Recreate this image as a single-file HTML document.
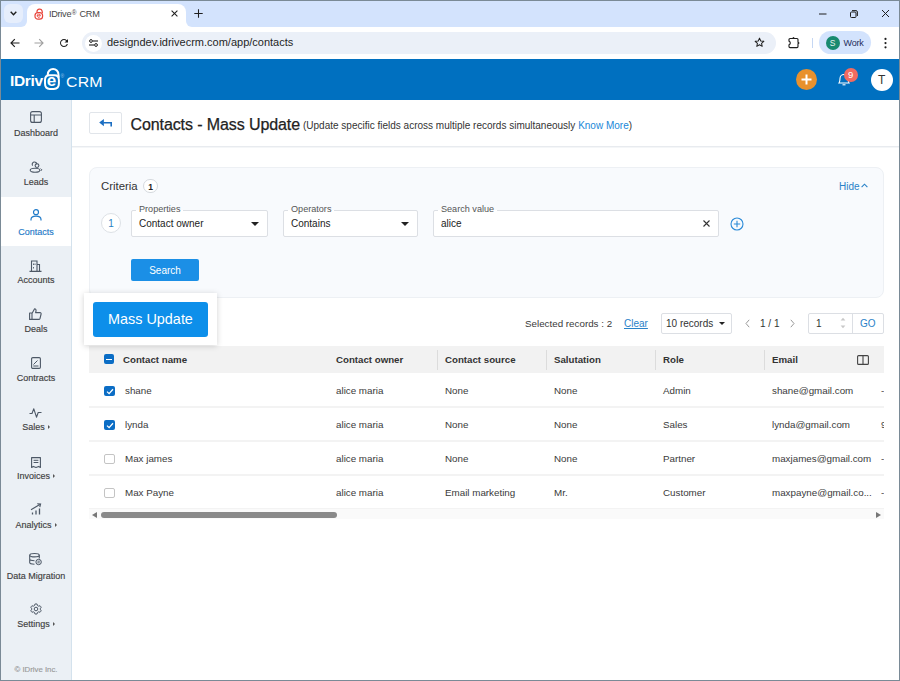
<!DOCTYPE html>
<html><head><meta charset="utf-8">
<style>
*{box-sizing:border-box;margin:0;padding:0}
html,body{width:900px;height:681px;overflow:hidden;background:#fff;font-family:"Liberation Sans",sans-serif;color:#333}
.a{position:absolute}
.t{position:absolute;white-space:nowrap;line-height:1}
svg{position:absolute;overflow:visible}
.lb{position:absolute;left:1px;width:70px;text-align:center;font-size:9px;color:#3d3d3d;white-space:nowrap;line-height:1;-webkit-text-stroke:0.15px currentColor}
.sic{position:absolute;left:30px}
</style></head><body>
<!-- ===== Browser chrome ===== -->
<div class="a" style="left:0;top:0;width:900px;height:27px;background:#d3e3fd"></div>
<!-- tab -->
<div class="a" style="left:27px;top:4px;width:159px;height:24px;background:#fff;border-radius:8px 8px 0 0"></div>
<div class="a" style="left:21px;top:21px;width:6px;height:6px;background:#fff"></div>
<div class="a" style="left:15px;top:15px;width:12px;height:12px;background:#d3e3fd;border-bottom-right-radius:6px"></div>
<div class="a" style="left:186px;top:21px;width:6px;height:6px;background:#fff"></div>
<div class="a" style="left:186px;top:15px;width:12px;height:12px;background:#d3e3fd;border-bottom-left-radius:6px"></div>
<div class="a" style="left:4px;top:4px;width:19px;height:19px;border-radius:6px;background:#e6eefc"></div>
<svg style="left:10px;top:11px" width="7" height="5" viewBox="0 0 7 5"><path d="M0.7 0.8 L3.5 3.8 L6.3 0.8" fill="none" stroke="#1f1f1f" stroke-width="1.4"/></svg>
<svg style="left:34px;top:8px" width="10" height="12" viewBox="0 0 10 12"><path d="M3 4.6 V3.6 A2.6 2.6 0 0 1 8.1 3 L8.4 5" fill="none" stroke="#e8453c" stroke-width="1.2"/><rect x="1" y="4.6" width="7.6" height="6.6" rx="3" fill="none" stroke="#e8453c" stroke-width="1.2"/><path d="M3.3 7.8 H6.5 M6.4 7.8 A1.6 1.6 0 1 0 5.8 9" fill="none" stroke="#e8453c" stroke-width="0.9"/></svg>
<div class="t" style="left:49px;top:9.8px;font-size:9.2px;letter-spacing:-0.3px;color:#474747">IDrive<span style="font-size:6.5px;vertical-align:2px;margin:0 1px 0 0.5px">®</span> CRM</div>
<svg style="left:171px;top:10px" width="7" height="7" viewBox="0 0 7 7"><path d="M0.6 0.6 L6.4 6.4 M6.4 0.6 L0.6 6.4" stroke="#1f1f1f" stroke-width="1.05"/></svg>
<svg style="left:194px;top:9px" width="9" height="9" viewBox="0 0 9 9"><path d="M4.5 0.3 V8.7 M0.3 4.5 H8.7" stroke="#1f1f1f" stroke-width="1.05"/></svg>
<!-- window controls -->
<svg style="left:819px;top:13px" width="8" height="2" viewBox="0 0 8 2"><path d="M0 1 H7.5" stroke="#1f1f1f" stroke-width="1"/></svg>
<svg style="left:850px;top:10px" width="8" height="8" viewBox="0 0 8 8"><rect x="0.5" y="2" width="5.5" height="5.5" rx="1" fill="none" stroke="#1f1f1f" stroke-width="1"/><path d="M2 0.6 H6 A1.5 1.5 0 0 1 7.4 2 V6" fill="none" stroke="#1f1f1f" stroke-width="1"/></svg>
<svg style="left:882px;top:10px" width="7" height="7" viewBox="0 0 7 7"><path d="M0 0 L7 7 M7 0 L0 7" stroke="#1f1f1f" stroke-width="1"/></svg>
<!-- toolbar -->
<div class="a" style="left:0;top:27px;width:900px;height:32px;background:#fff"></div>
<svg style="left:10px;top:38px" width="10" height="10" viewBox="0 0 10 10"><path d="M9.5 5 H1.2 M4.8 1.2 L1 5 L4.8 8.8" fill="none" stroke="#1f1f1f" stroke-width="1.15"/></svg>
<svg style="left:34px;top:38px" width="10" height="10" viewBox="0 0 10 10"><path d="M0.5 5 H8.8 M5.2 1.2 L9 5 L5.2 8.8" fill="none" stroke="#a0a0a0" stroke-width="1.15"/></svg>
<svg style="left:58px;top:37px" width="12" height="12" viewBox="0 0 24 24"><path d="M17.65 6.35A7.958 7.958 0 0 0 12 4c-4.42 0-7.99 3.58-7.99 8s3.57 8 7.99 8c3.73 0 6.84-2.55 7.73-6h-2.08A5.99 5.99 0 0 1 12 18c-3.31 0-6-2.690-6-6s2.69-6 6-6c1.66 0 3.14.69 4.22 1.78L13 11h7V4l-2.35 2.35z" fill="#1f1f1f"/></svg>
<div class="a" style="left:82px;top:31.6px;width:694px;height:22.8px;border-radius:11.4px;background:#ebf0f8"></div>
<div class="a" style="left:85px;top:35px;width:17px;height:17px;border-radius:50%;background:#fff"></div>
<svg style="left:89px;top:39px" width="9" height="8" viewBox="0 0 9 8"><circle cx="2" cy="2" r="1.4" fill="none" stroke="#1f1f1f" stroke-width="1"/><path d="M4 2 H9" stroke="#1f1f1f" stroke-width="1.1"/><circle cx="7" cy="6" r="1.4" fill="none" stroke="#1f1f1f" stroke-width="1"/><path d="M0 6 H5" stroke="#1f1f1f" stroke-width="1.1"/></svg>
<div class="t" style="left:107px;top:37px;font-size:11px;color:#1f1f1f">designdev.idrivecrm.com/app/contacts</div>
<svg style="left:754px;top:37px" width="11" height="11" viewBox="0 0 24 24"><path d="M12 2.5 L14.8 8.6 L21.5 9.3 L16.5 13.8 L17.9 20.4 L12 17 L6.1 20.4 L7.5 13.8 L2.5 9.3 L9.2 8.6 Z" fill="none" stroke="#1f1f1f" stroke-width="2.2" stroke-linejoin="round"/></svg>
<svg style="left:788px;top:37px" width="12" height="12" viewBox="0 0 12 12"><path d="M2 1.5 H4.7 L5.5 0.7 L6.3 1.5 H9 A1 1 0 0 1 10 2.5 V5.2 L10.9 6 L10 6.8 V9.6 A1 1 0 0 1 9 10.6 H2 A1 1 0 0 1 1 9.6 V7.8 A1.9 1.9 0 0 0 1 4.2 V2.5 A1 1 0 0 1 2 1.5 Z" fill="none" stroke="#1f1f1f" stroke-width="1.15" stroke-linejoin="round"/></svg>
<div class="a" style="left:812px;top:38px;width:1px;height:10px;background:#c5d7f3"></div>
<div class="a" style="left:819px;top:31px;width:52px;height:23px;border-radius:12px;background:#d3e3fd"></div>
<div class="a" style="left:825.5px;top:36px;width:14px;height:14px;border-radius:50%;background:#188a6f"></div>
<div class="t" style="left:825.5px;width:14px;text-align:center;top:39px;font-size:8.5px;color:#e6f4ef">S</div>
<div class="t" style="left:843.5px;top:38.5px;font-size:9px;color:#1f2d5c;letter-spacing:-0.2px">Work</div>
<svg style="left:884px;top:37px" width="3" height="12" viewBox="0 0 3 12"><circle cx="1.5" cy="1.9" r="1.1" fill="#1f1f1f"/><circle cx="1.5" cy="6.1" r="1.1" fill="#1f1f1f"/><circle cx="1.5" cy="10.3" r="1.1" fill="#1f1f1f"/></svg>

<!-- ===== App header ===== -->
<div class="a" style="left:0;top:59px;width:900px;height:41px;background:#0070c0"></div>
<div class="t" style="left:10px;top:73.2px;font-size:15.5px;font-weight:bold;color:#fff;letter-spacing:-0.35px">IDriv</div>
<svg style="left:44px;top:67px" width="18" height="24" viewBox="0 0 18 24"><path d="M3.8 8.2 V7.3 A5.3 5.3 0 0 1 14.4 7.3 L14.8 10.5" fill="none" stroke="#fff" stroke-width="2"/><path d="M5.5 8.2 H10.5 C13.5 8.2 14.9 10 14.9 13 V16.6 C14.9 20 13 21.9 9.8 21.9 H5.8 C2.6 21.9 1 20 1 16.6 V13 C1 10 2.6 8.2 5.5 8.2 Z" fill="none" stroke="#fff" stroke-width="2"/></svg>
<div class="t" style="left:46.8px;top:72px;font-size:17px;font-weight:bold;color:#fff">e</div>
<div class="t" style="left:60.5px;top:74px;font-size:5px;color:#9cc4ea">®</div>
<div class="t" style="left:66px;top:75.3px;font-size:14px;color:#fff;letter-spacing:0.2px;transform:scaleX(1.13);transform-origin:0 0">CRM</div>
<div class="a" style="left:796px;top:69px;width:21px;height:21px;border-radius:50%;background:#e8912d"></div>
<svg style="left:801px;top:74px" width="11" height="11" viewBox="0 0 11 11"><path d="M5.5 0.5 V10.5 M0.5 5.5 H10.5" stroke="#fff" stroke-width="2"/></svg>
<svg style="left:837px;top:72px" width="14" height="15" viewBox="0 0 14 15"><path d="M2 11 C3 9.5 3 8 3 6.5 A4 4 0 0 1 11 6.5 C11 8 11 9.5 12 11 Z" fill="none" stroke="#fff" stroke-width="1.1"/><path d="M5.5 12.8 H8.5" stroke="#fff" stroke-width="1.1"/></svg>
<div class="a" style="left:844px;top:68px;width:14px;height:14px;border-radius:50%;background:#f26b60"></div>
<div class="t" style="left:848px;top:70px;font-size:9.5px;color:#fff">9</div>
<div class="a" style="left:871px;top:69px;width:22px;height:22px;border-radius:50%;background:#fff"></div>
<div class="t" style="left:878px;top:74px;font-size:12px;color:#333">T</div>

<!-- ===== Sidebar ===== -->
<div class="a" style="left:0;top:100px;width:72px;height:581px;background:#ebf0f5;border-right:1px solid #d4e2ed"></div>
<div class="a" style="left:1px;top:197px;width:70px;height:49px;background:#fff"></div>
<svg style="left:30px;top:110.5px" width="12" height="12" viewBox="0 0 12 12"><rect x="0.6" y="0.6" width="10.8" height="10.8" rx="2" fill="none" stroke="#4d5866" stroke-width="1.1"/><path d="M0.6 4 H11.4 M4.2 4 V11.4" stroke="#4d5866" stroke-width="1.1"/></svg>
<div class="lb" style="top:129.08px;color:#3f3f3f">Dashboard</div>
<svg style="left:29px;top:162.2px" width="14" height="11" viewBox="0 0 14 11"><path d="M3.6 3.6 A2.3 2.3 0 1 1 7.8 2.4" fill="none" stroke="#4d5866" stroke-width="1.1"/><circle cx="8" cy="3.6" r="1.9" fill="none" stroke="#4d5866" stroke-width="1.1"/><ellipse cx="6" cy="8.3" rx="4.8" ry="2" fill="none" stroke="#4d5866" stroke-width="1.1"/><path d="M11.6 6.6 L12.8 7.8 L11.6 9" fill="none" stroke="#4d5866" stroke-width="1"/></svg>
<div class="lb" style="top:177.98px;color:#3f3f3f">Leads</div>
<svg style="left:30px;top:209.3px" width="12" height="12" viewBox="0 0 12 12"><circle cx="6" cy="3.2" r="2.5" fill="none" stroke="#1f7ac8" stroke-width="1.2"/><path d="M1 11.5 V10.5 C1 8 3 7.2 6 7.2 C9 7.2 11 8 11 10.5 V11.5" fill="none" stroke="#1f7ac8" stroke-width="1.2"/></svg>
<div class="lb" style="top:227.58px;color:#1f7ac8">Contacts</div>
<svg style="left:29px;top:260.0px" width="13" height="12" viewBox="0 0 13 12"><path d="M2.5 11 V1 H8 V11 M8 4.5 H10.5 V11 M0.5 11.4 H12.5" fill="none" stroke="#4d5866" stroke-width="1.1"/><path d="M4.5 3.5 V5 M4.5 7 V8.5 M6 3.5 V5" stroke="#4d5866" stroke-width="0.9"/></svg>
<div class="lb" style="top:276.18px;color:#3f3f3f">Accounts</div>
<svg style="left:29px;top:308.0px" width="13" height="12" viewBox="0 0 13 12"><path d="M0.6 5 H3 V11.4 H0.6 Z M3 5.5 L5.6 0.8 C6.8 0.8 7.2 1.8 7 3 L6.6 4.6 H11 C11.8 4.6 12.3 5.3 12.1 6 L11 10.5 C10.8 11.1 10.4 11.4 9.8 11.4 H3" fill="none" stroke="#4d5866" stroke-width="1.1" stroke-linejoin="round"/></svg>
<div class="lb" style="top:325.18px;color:#3f3f3f">Deals</div>
<svg style="left:31px;top:357.0px" width="10" height="12" viewBox="0 0 10 12"><rect x="0.6" y="0.6" width="8.8" height="10.8" rx="1.2" fill="none" stroke="#4d5866" stroke-width="1.1"/><path d="M2.5 7.5 L6.5 3.5 M2.3 9 H7.5" stroke="#4d5866" stroke-width="1"/></svg>
<div class="lb" style="top:374.18px;color:#3f3f3f">Contracts</div>
<svg style="left:29px;top:407.5px" width="13" height="10" viewBox="0 0 13 10"><path d="M0.5 5.5 H3 L4.8 0.8 L7.5 9.2 L9.2 4.5 H12.5" fill="none" stroke="#4d5866" stroke-width="1.1" stroke-linejoin="round"/></svg>
<div class="lb" style="top:423.38px;color:#3f3f3f">Sales<span style="display:inline-block;width:0;height:0;border-left:2.6px solid #555;border-top:2.6px solid transparent;border-bottom:2.6px solid transparent;margin-left:3px;vertical-align:1px"></span></div>
<svg style="left:31px;top:456.5px" width="10" height="11" viewBox="0 0 10 11"><path d="M0.6 0.6 H9.4 V10.4 L7.6 9.4 L5 10.4 L2.4 9.4 L0.6 10.4 Z" fill="none" stroke="#4d5866" stroke-width="1.1" stroke-linejoin="round"/><path d="M2.6 3.3 H7.4 M2.6 5.5 H7.4" stroke="#4d5866" stroke-width="1"/></svg>
<div class="lb" style="top:472.18px;color:#3f3f3f">Invoices<span style="display:inline-block;width:0;height:0;border-left:2.6px solid #555;border-top:2.6px solid transparent;border-bottom:2.6px solid transparent;margin-left:3px;vertical-align:1px"></span></div>
<svg style="left:30px;top:503.0px" width="12" height="12" viewBox="0 0 12 12"><path d="M2.5 11.5 V9.4 M6 11.5 V7.4 M9.5 11.5 V5.4" stroke="#4d5866" stroke-width="1.3"/><path d="M1 6.8 L10.2 1.2 M7.2 0.8 L10.6 1 L9.8 4.2" fill="none" stroke="#4d5866" stroke-width="1.1"/></svg>
<div class="lb" style="top:521.48px;color:#3f3f3f">Analytics<span style="display:inline-block;width:0;height:0;border-left:2.6px solid #555;border-top:2.6px solid transparent;border-bottom:2.6px solid transparent;margin-left:3px;vertical-align:1px"></span></div>
<svg style="left:29px;top:553.2px" width="13" height="12" viewBox="0 0 13 12"><ellipse cx="5.5" cy="2.2" rx="4.8" ry="1.7" fill="none" stroke="#4d5866" stroke-width="1.1"/><path d="M0.7 2.2 V9.6 C0.7 10.6 2.8 11.3 5.5 11.3 M10.3 2.2 V5.5 M0.7 6 C0.7 7 2.8 7.7 5.5 7.7" fill="none" stroke="#4d5866" stroke-width="1.1"/><circle cx="9.6" cy="9" r="2.7" fill="none" stroke="#4d5866" stroke-width="1"/><path d="M8.5 8.2 H10.8 M10.7 9.8 H8.4" stroke="#4d5866" stroke-width="0.9"/></svg>
<div class="lb" style="top:571.88px;color:#3f3f3f">Data Migration</div>
<svg style="left:30px;top:603.0px" width="12" height="12" viewBox="0 0 24 24"><path d="M12 1.8 L14.2 2.2 L14.9 5 L17.4 6.4 L20.1 5.5 L21.6 7.4 L22.2 9.6 L20.2 11.6 V12.4 L22.2 14.4 L21.6 16.6 L20.1 18.5 L17.4 17.6 L14.9 19 L14.2 21.8 L12 22.2 L9.8 21.8 L9.1 19 L6.6 17.6 L3.9 18.5 L2.4 16.6 L1.8 14.4 L3.8 12.4 V11.6 L1.8 9.6 L2.4 7.4 L3.9 5.5 L6.6 6.4 L9.1 5 L9.8 2.2 Z" fill="none" stroke="#4d5866" stroke-width="2" stroke-linejoin="round"/><circle cx="12" cy="12" r="3.6" fill="none" stroke="#4d5866" stroke-width="2"/></svg>
<div class="lb" style="top:620.18px;color:#3f3f3f">Settings<span style="display:inline-block;width:0;height:0;border-left:2.6px solid #555;border-top:2.6px solid transparent;border-bottom:2.6px solid transparent;margin-left:3px;vertical-align:1px"></span></div>
<div class="lb" style="top:665.90px;font-size:7.8px;color:#9a9a9a">© IDrive Inc.</div>


<!-- ===== Main ===== -->
<div class="a" style="left:72px;top:146px;width:827px;height:1px;background:#e8ebef"></div>
<div class="a" style="left:72px;top:147px;width:827px;height:1px;background:#f4f6f8"></div>
<div class="a" style="left:89px;top:112px;width:33px;height:22px;border:1px solid #e1e5ea;border-radius:2px;background:#fff"></div>
<svg style="left:98px;top:118px" width="15" height="10" viewBox="0 0 15 10"><path d="M1.2 4.6 L5.9 1 V8.2 Z" fill="#1b6ec2"/><path d="M5.5 4.7 H13.2 V8.6" fill="none" stroke="#1b6ec2" stroke-width="1.6"/></svg>
<div class="t" style="left:130.5px;top:117.26px;font-size:16px;color:#222;letter-spacing:-0.1px;-webkit-text-stroke:0.25px #222">Contacts - Mass Update</div>
<div class="t" style="left:303px;top:121.03px;font-size:10px;color:#333;">(Update specific fields across multiple records simultaneously <span style="color:#2187d8">Know More</span>)</div>
<div class="a" style="left:89px;top:167px;width:795px;height:131px;border:1px solid #edf0f4;border-radius:8px;background:#f8fafd"></div>
<div class="t" style="left:101px;top:180.75px;font-size:11.4px;color:#333;">Criteria</div>
<div class="a" style="left:143px;top:179px;width:15px;height:14px;border:1px solid #d5d9de;border-radius:7px;background:#fff"></div>
<div class="t" style="left:145.5px;width:10px;text-align:center;top:182.60px;font-size:8.5px;font-weight:bold;color:#222;">1</div>
<div class="t" style="left:839px;top:181.53px;font-size:10px;color:#2a82c8;">Hide</div>
<svg style="left:861px;top:183px" width="7" height="5" viewBox="0 0 7 5"><path d="M0.6 4.2 L3.5 1.2 L6.4 4.2" fill="none" stroke="#2a82c8" stroke-width="1.1"/></svg>
<div class="a" style="left:101px;top:213px;width:20px;height:20px;border:1px solid #dde1e6;border-radius:50%;background:#fff"></div>
<div class="t" style="left:105.0px;width:12px;text-align:center;top:219.03px;font-size:10px;color:#2a7fc2;">1</div>
<div class="a" style="left:131px;top:210px;width:137px;height:27px;border:1px solid #dcdfe4;border-radius:2px;background:#fff"></div>
<div class="t" style="left:136px;top:205.40px;font-size:9.1px;color:#555;background:linear-gradient(#f8fafd 0,#f8fafd 52%,#fff 52%);padding:0 3px">Properties</div>
<div class="t" style="left:139px;top:218.73px;font-size:10px;color:#222;">Contact owner</div>
<div class="a" style="left:251px;top:222px;width:0;height:0;border-left:4.5px solid transparent;border-right:4.5px solid transparent;border-top:4.5px solid #222"></div>
<div class="a" style="left:283px;top:210px;width:135px;height:27px;border:1px solid #dcdfe4;border-radius:2px;background:#fff"></div>
<div class="t" style="left:288px;top:205.40px;font-size:9.1px;color:#555;background:linear-gradient(#f8fafd 0,#f8fafd 52%,#fff 52%);padding:0 3px">Operators</div>
<div class="t" style="left:291px;top:218.73px;font-size:10px;color:#222;">Contains</div>
<div class="a" style="left:401px;top:222px;width:0;height:0;border-left:4.5px solid transparent;border-right:4.5px solid transparent;border-top:4.5px solid #222"></div>
<div class="a" style="left:433px;top:210px;width:286px;height:27px;border:1px solid #dcdfe4;border-radius:2px;background:#fff"></div>
<div class="t" style="left:438px;top:205.40px;font-size:9.1px;color:#555;background:linear-gradient(#f8fafd 0,#f8fafd 52%,#fff 52%);padding:0 3px">Search value</div>
<div class="t" style="left:441px;top:218.73px;font-size:10px;color:#222;">alice</div>
<svg style="left:702.5px;top:220px" width="7" height="7" viewBox="0 0 7 7"><path d="M0.5 0.5 L6.5 6.5 M6.5 0.5 L0.5 6.5" stroke="#333" stroke-width="1.1"/></svg>
<svg style="left:730px;top:217px" width="14" height="14" viewBox="0 0 14 14"><circle cx="7" cy="7" r="6" fill="none" stroke="#2a8ad8" stroke-width="1.1"/><path d="M7 3.8 V10.2 M3.8 7 H10.2" stroke="#2a8ad8" stroke-width="1.1"/></svg>
<div class="a" style="left:131px;top:259px;width:68px;height:22px;border-radius:2px;background:#1b8fe6"></div>
<div class="t" style="left:131.0px;width:68px;text-align:center;top:265.54px;font-size:10px;color:#fff;">Search</div>
<div class="t" style="left:525px;top:318.50px;font-size:9.8px;color:#3a3a3a;">Selected records : 2</div>
<div class="t" style="left:624px;top:318.94px;font-size:10px;color:#2a82c8;"><span style="text-decoration:underline">Clear</span></div>
<div class="a" style="left:661px;top:313px;width:71px;height:21px;border:1px solid #dcdfe4;border-radius:2px;background:#fff"></div>
<div class="t" style="left:666px;top:318.54px;font-size:10px;color:#333;">10 records</div>
<div class="a" style="left:718.5px;top:321.5px;width:0;height:0;border-left:3.5px solid transparent;border-right:3.5px solid transparent;border-top:3.5px solid #222"></div>
<svg style="left:745px;top:319px" width="5" height="9" viewBox="0 0 5 9"><path d="M4.2 0.8 L1 4.5 L4.2 8.2" fill="none" stroke="#999" stroke-width="1"/></svg>
<div class="t" style="left:760px;top:318.54px;font-size:10px;color:#333;">1 / 1</div>
<svg style="left:790px;top:319px" width="5" height="9" viewBox="0 0 5 9"><path d="M0.8 0.8 L4 4.5 L0.8 8.2" fill="none" stroke="#999" stroke-width="1"/></svg>
<div class="a" style="left:808px;top:313px;width:76px;height:21px;border:1px solid #dcdfe4;border-radius:2px;background:#fff"></div>
<div class="a" style="left:852px;top:313px;width:1px;height:21px;background:#dcdfe4"></div>
<div class="t" style="left:816px;top:318.54px;font-size:10px;color:#333;">1</div>
<svg style="left:840px;top:316px" width="6" height="14" viewBox="0 0 6 14"><path d="M0.6 4.6 L3 1.8 L5.4 4.6 Z M0.6 9.4 L3 12.2 L5.4 9.4 Z" fill="#c8c8c8"/></svg>
<div class="t" style="left:860px;top:318.54px;font-size:10px;color:#2a82c8;">GO</div>
<div class="a" style="left:89px;top:346px;width:795px;height:27px;background:#f2f2f2"></div>
<div class="a" style="left:437px;top:350px;width:1px;height:20px;background:#dcdcdc"></div>
<div class="a" style="left:546px;top:350px;width:1px;height:20px;background:#dcdcdc"></div>
<div class="a" style="left:655px;top:350px;width:1px;height:20px;background:#dcdcdc"></div>
<div class="a" style="left:764px;top:350px;width:1px;height:20px;background:#dcdcdc"></div>
<div class="a" style="left:104px;top:354px;width:10.3px;height:10.3px;border-radius:2px;background:#0b6dc5"></div>
<div class="a" style="left:106.3px;top:358.6px;width:5.8px;height:1.3px;background:#fff"></div>
<div class="t" style="left:123px;top:354.99px;font-size:9.7px;font-weight:bold;color:#333;">Contact name</div>
<div class="t" style="left:336px;top:354.99px;font-size:9.7px;font-weight:bold;color:#333;">Contact owner</div>
<div class="t" style="left:445px;top:354.99px;font-size:9.7px;font-weight:bold;color:#333;">Contact source</div>
<div class="t" style="left:554px;top:354.99px;font-size:9.7px;font-weight:bold;color:#333;">Salutation</div>
<div class="t" style="left:663px;top:354.99px;font-size:9.7px;font-weight:bold;color:#333;">Role</div>
<div class="t" style="left:772px;top:354.99px;font-size:9.7px;font-weight:bold;color:#333;">Email</div>
<svg style="left:857px;top:355px" width="12" height="10" viewBox="0 0 12 10"><rect x="0.6" y="0.6" width="10.8" height="8.8" rx="1" fill="none" stroke="#444" stroke-width="1.1"/><path d="M6 0.6 V9.4" stroke="#444" stroke-width="1.1"/></svg>
<div class="a" style="left:89px;top:406px;width:795px;height:2px;background:#f3f3f3"></div>
<div class="a" style="left:104px;top:385.5px;width:10.5px;height:10.5px;border-radius:2px;background:#0b6dc5"></div>
<svg style="left:105.5px;top:387.5px" width="8" height="7" viewBox="0 0 8 7"><path d="M1 3.6 L3.1 5.6 L7 1.2" fill="none" stroke="#fff" stroke-width="1.3"/></svg>
<div class="t" style="left:125px;top:386.40px;font-size:9.8px;color:#3a3a3a;">shane</div>
<div class="t" style="left:336px;top:386.40px;font-size:9.8px;color:#3a3a3a;">alice maria</div>
<div class="t" style="left:445px;top:386.40px;font-size:9.8px;color:#3a3a3a;">None</div>
<div class="t" style="left:554px;top:386.40px;font-size:9.8px;color:#3a3a3a;">None</div>
<div class="t" style="left:663px;top:386.40px;font-size:9.8px;color:#3a3a3a;">Admin</div>
<div class="t" style="left:772px;top:386.40px;font-size:9.8px;color:#3a3a3a;">shane@gmail.com</div>
<div class="a" style="left:881px;top:373px;width:3px;height:33px;overflow:hidden"><div class="t" style="left:0;top:13.40px;font-size:9.8px;color:#444">-</div></div>
<div class="a" style="left:89px;top:440px;width:795px;height:2px;background:#f3f3f3"></div>
<div class="a" style="left:104px;top:419.5px;width:10.5px;height:10.5px;border-radius:2px;background:#0b6dc5"></div>
<svg style="left:105.5px;top:421.5px" width="8" height="7" viewBox="0 0 8 7"><path d="M1 3.6 L3.1 5.6 L7 1.2" fill="none" stroke="#fff" stroke-width="1.3"/></svg>
<div class="t" style="left:125px;top:420.40px;font-size:9.8px;color:#3a3a3a;">lynda</div>
<div class="t" style="left:336px;top:420.40px;font-size:9.8px;color:#3a3a3a;">alice maria</div>
<div class="t" style="left:445px;top:420.40px;font-size:9.8px;color:#3a3a3a;">None</div>
<div class="t" style="left:554px;top:420.40px;font-size:9.8px;color:#3a3a3a;">None</div>
<div class="t" style="left:663px;top:420.40px;font-size:9.8px;color:#3a3a3a;">Sales</div>
<div class="t" style="left:772px;top:420.40px;font-size:9.8px;color:#3a3a3a;">lynda@gmail.com</div>
<div class="a" style="left:881px;top:407px;width:3px;height:33px;overflow:hidden"><div class="t" style="left:0;top:13.40px;font-size:9.8px;color:#444">9</div></div>
<div class="a" style="left:89px;top:474px;width:795px;height:2px;background:#f3f3f3"></div>
<div class="a" style="left:104px;top:453.5px;width:10.5px;height:10.5px;border-radius:2px;border:1px solid #c4c4c4;background:#fff"></div>
<div class="t" style="left:125px;top:454.40px;font-size:9.8px;color:#3a3a3a;">Max james</div>
<div class="t" style="left:336px;top:454.40px;font-size:9.8px;color:#3a3a3a;">alice maria</div>
<div class="t" style="left:445px;top:454.40px;font-size:9.8px;color:#3a3a3a;">None</div>
<div class="t" style="left:554px;top:454.40px;font-size:9.8px;color:#3a3a3a;">None</div>
<div class="t" style="left:663px;top:454.40px;font-size:9.8px;color:#3a3a3a;">Partner</div>
<div class="t" style="left:772px;top:454.40px;font-size:9.8px;color:#3a3a3a;">maxjames@gmail.com</div>
<div class="a" style="left:881px;top:441px;width:3px;height:33px;overflow:hidden"><div class="t" style="left:0;top:13.40px;font-size:9.8px;color:#444">-</div></div>
<div class="a" style="left:89px;top:508px;width:795px;height:2px;background:#f3f3f3"></div>
<div class="a" style="left:104px;top:487.5px;width:10.5px;height:10.5px;border-radius:2px;border:1px solid #c4c4c4;background:#fff"></div>
<div class="t" style="left:125px;top:488.40px;font-size:9.8px;color:#3a3a3a;">Max Payne</div>
<div class="t" style="left:336px;top:488.40px;font-size:9.8px;color:#3a3a3a;">alice maria</div>
<div class="t" style="left:445px;top:488.40px;font-size:9.8px;color:#3a3a3a;">Email marketing</div>
<div class="t" style="left:554px;top:488.40px;font-size:9.8px;color:#3a3a3a;">Mr.</div>
<div class="t" style="left:663px;top:488.40px;font-size:9.8px;color:#3a3a3a;">Customer</div>
<div class="t" style="left:772px;top:488.40px;font-size:9.8px;color:#3a3a3a;">maxpayne@gmail.co...</div>
<div class="a" style="left:881px;top:475px;width:3px;height:33px;overflow:hidden"><div class="t" style="left:0;top:13.40px;font-size:9.8px;color:#444">-</div></div>
<div class="a" style="left:89px;top:509px;width:795px;height:10px;background:#fafafa"></div>
<div class="a" style="left:92px;top:512px;width:0;height:0;border-right:5px solid #777;border-top:3px solid transparent;border-bottom:3px solid transparent"></div>
<div class="a" style="left:101px;top:511.5px;width:236px;height:6px;border-radius:3px;background:#8a8a8a"></div>
<div class="a" style="left:876px;top:512px;width:0;height:0;border-left:5px solid #777;border-top:3px solid transparent;border-bottom:3px solid transparent"></div>
<div class="a" style="left:84px;top:293px;width:133px;height:52px;background:#fff;box-shadow:0 1px 6px rgba(0,0,0,0.18)"></div>
<div class="a" style="left:93px;top:302px;width:115px;height:35px;border-radius:3px;background:#0d8fea"></div>
<div class="t" style="left:93.0px;width:115px;text-align:center;top:311.81px;font-size:14.4px;color:#fff;">Mass Update</div>


<!-- window border -->
<div class="a" style="left:0;top:0;width:900px;height:681px;border:1px solid #7a8a96;pointer-events:none"></div>
</body></html>
